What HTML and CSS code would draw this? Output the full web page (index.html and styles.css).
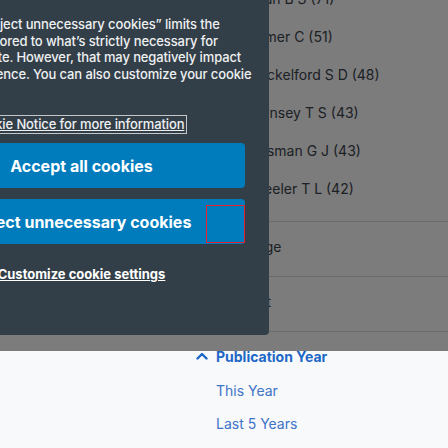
FILE: index.html
```html
<!DOCTYPE html>
<html lang="en">
<head>
<meta charset="utf-8">
<title>Search results</title>
<link rel="stylesheet" href="styles.css">
</head>
<body>
<main class="page">
  <aside class="filters">
    <section class="facet facet-authors">
      <ul class="author-list">
        <li class="author"><span class="check"></span><span class="name">Bryan B S (71)</span></li>
        <li class="author"><span class="check"></span><span class="name">Kramer C (51)</span></li>
        <li class="author"><span class="check"></span><span class="name">Shackelford S D (48)</span></li>
        <li class="author"><span class="check"></span><span class="name">Townsey T S (43)</span></li>
        <li class="author"><span class="check"></span><span class="name">Bossman G J (43)</span></li>
        <li class="author"><span class="check"></span><span class="name">Wheeler T L (42)</span></li>
      </ul>
    </section>
    <section class="facet">
      <div class="facet-head">
        <svg class="caret" width="12" height="8" viewBox="0 0 12 8"><path d="M1.5 1.5 L6 6 L10.5 1.5" fill="none" stroke="currentColor" stroke-width="2.2" stroke-linecap="round" stroke-linejoin="round"/></svg>
        <span>Language</span>
      </div>
    </section>
    <section class="facet">
      <div class="facet-head">
        <svg class="caret" width="12" height="8" viewBox="0 0 12 8"><path d="M1.5 1.5 L6 6 L10.5 1.5" fill="none" stroke="currentColor" stroke-width="2.2" stroke-linecap="round" stroke-linejoin="round"/></svg>
        <span>Full Text</span>
      </div>
    </section>
    <section class="facet facet-open">
      <div class="facet-head">
        <svg class="caret" width="12" height="8" viewBox="0 0 12 8"><path d="M1.5 6.5 L6 2 L10.5 6.5" fill="none" stroke="currentColor" stroke-width="2.4" stroke-linecap="round" stroke-linejoin="round"/></svg>
        <span>Publication Year</span>
      </div>
      <ul class="year-list">
        <li>This Year</li>
        <li>Last 5 Years</li>
      </ul>
    </section>
  </aside>
</main>

<div class="overlay"></div>

<div class="cookie-panel" role="dialog" aria-label="Cookie preferences">
  <p class="cookie-text">Selecting “Reject unnecessary cookies” limits the<br>data that is stored to what’s strictly necessary for<br>to run your site. However, that may negatively impact<br>a web experience. You can also customize your cookie<br>settings.</p>
  <p class="cookie-notice">See our <a href="#" class="notice-link">Cookie Notice for more information</a></p>
  <div class="cookie-actions">
    <button class="cookie-btn" type="button">Accept all cookies</button>
    <button class="cookie-btn" type="button">Reject unnecessary cookies<span class="debug-box"></span></button>
  </div>
  <div class="customize"><a href="#" class="customize-link">Customize cookie settings</a></div>
</div>
</body>
</html>
```

FILE: styles.css
```css
* { box-sizing: border-box; }

html, body {
  margin: 0;
  padding: 0;
}

body {
  position: relative;
  width: 448px;
  height: 448px;
  overflow: hidden;
  background: #f8f9fa;
  font-family: Inter, "Noto Sans", sans-serif;
  color: #333;
}

/* ---------- underlying filter column ---------- */
.filters {
  margin-left: 196px;
  margin-top: -21px;
}

.facet {
  border-top: 1px solid #d6d6d6;
}

.facet-authors {
  border-top: none;
  padding-bottom: 14px;
}

.author-list,
.year-list {
  list-style: none;
  margin: 0;
  padding: 0;
}

.author {
  display: flex;
  align-items: center;
  gap: 10px;
  height: 38px;
  padding-left: 20px;
  font-size: 14px;
  color: #3a4148;
}

.check {
  width: 16px;
  height: 16px;
  border: 1px solid #888;
  border-radius: 2px;
  background: #fff;
}

.facet-head {
  display: flex;
  align-items: center;
  gap: 8px;
  padding: 16px 0 20px;
  line-height: 18px;
  font-size: 14px;
  color: #3a4148;
}

.caret {
  flex: none;
}

.facet-open .facet-head {
  padding-bottom: 8px;
  color: #1d67c6;
  font-weight: 700;
}

.facet-open .caret {
  margin-top: -3px;
}

.year-list li {
  height: 33px;
  line-height: 33px;
  padding-left: 20px;
  font-size: 14px;
  color: #3e74c8;
}

/* ---------- modal overlay ---------- */
.overlay {
  position: absolute;
  top: 0;
  left: 0;
  width: 100%;
  height: 351px;
  background: rgba(0, 0, 0, 0.5);
}

/* ---------- cookie panel ---------- */
.cookie-panel {
  position: absolute;
  top: 0;
  left: -106px;
  width: 375px;
  height: 335px;
  padding: 16px 24px 0;
  background: #333f48;
  border-radius: 0 0 4px 0;
  color: #eef0f2;
}

.cookie-text {
  margin: 0;
  font-size: 13px;
  line-height: 16.5px;
  font-weight: 500;
  letter-spacing: -0.12px;
  white-space: nowrap;
}

.cookie-notice {
  margin: 17.5px 0 0;
  font-size: 13px;
  line-height: 17px;
  font-weight: 500;
  letter-spacing: -0.12px;
}

.notice-link {
  display: inline-block;
  color: inherit;
  text-decoration: underline;
  outline: 1px solid #c4c6c8;
  padding: 0 2px;
}

.cookie-actions {
  display: flex;
  flex-direction: column;
  gap: 11px;
  margin-top: 10px;
}

.cookie-btn {
  position: relative;
  height: 45px;
  width: 100%;
  border: none;
  border-radius: 4px;
  background: #007cbd;
  color: #fff;
  font-family: inherit;
  font-size: 16px;
  font-weight: 700;
  text-align: center;
}

.debug-box {
  position: absolute;
  right: 0;
  bottom: 1px;
  width: 39px;
  height: 38px;
  border: 1px solid #e0222c;
}

.customize {
  margin-top: 21px;
  text-align: center;
  line-height: 17px;
}

.customize-link {
  color: #fff;
  font-size: 13px;
  font-weight: 700;
  text-decoration: underline;
}
```
